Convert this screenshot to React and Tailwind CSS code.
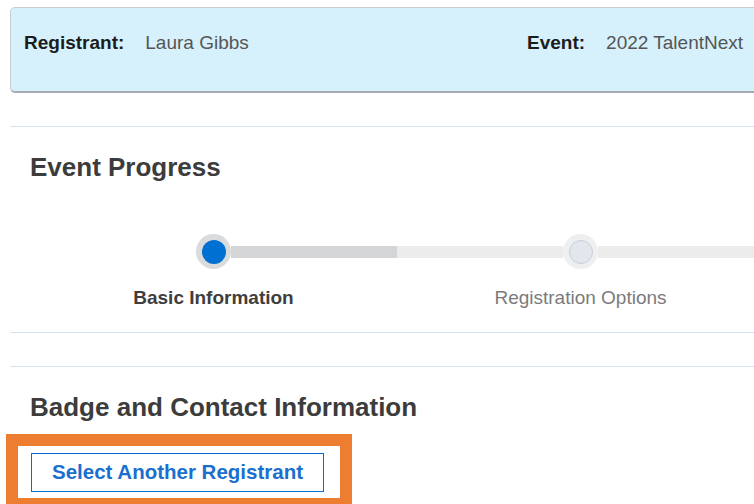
import { useState } from "react";

const steps = [
  { label: "Basic Information" },
  { label: "Registration Options" },
];

const StepDot = ({ active }) => {
  if (active) {
    return (
      <div className="w-[35px] h-[35px] shrink-0 rounded-full bg-[#dadbdc] flex items-center justify-center">
        <div className="w-[24px] h-[24px] rounded-full bg-[#0070d2]"></div>
      </div>
    );
  }
  return (
    <div className="w-[35px] h-[35px] shrink-0 rounded-full bg-[#efefef] flex items-center justify-center">
      <div className="w-[24px] h-[24px] rounded-full bg-[#e2e7ed] border-[1.5px] border-[#c7cfd9]"></div>
    </div>
  );
};

const Stepper = ({ current }) => {
  return (
    <div className="flex ml-[20px] mt-[52px]">
      {steps.map((step, i) => (
        <div key={step.label} className="w-[367px] shrink-0 flex flex-col items-center">
          <div className="w-full h-[35px] flex items-center">
            <div
              className={
                i === 0
                  ? "flex-1 h-[12px]"
                  : i <= current
                  ? "flex-1 h-[12px] bg-[#d4d5d7]"
                  : "flex-1 h-[12px] bg-[#ececec]"
              }
            ></div>
            <StepDot active={i === current} />
            <div
              className={
                i === current
                  ? "flex-1 h-[12px] bg-[#d4d5d7]"
                  : "flex-1 h-[12px] bg-[#ececec]"
              }
            ></div>
          </div>
          <p
            className={
              i === current
                ? "mt-[18px] text-[19px] leading-[22px] font-bold text-[#3e3e3e]"
                : "mt-[18px] text-[19px] leading-[22px] text-[#7b7b7b]"
            }
          >
            {step.label}
          </p>
        </div>
      ))}
    </div>
  );
};

const App = () => {
  const [current] = useState(0);

  return (
    <div className="w-[754px] h-[504px] overflow-hidden bg-white font-['Liberation_Sans',Arial,sans-serif]">
      {/* registrant summary */}
      <div className="ml-[10px] mt-[7px] w-[900px] h-[86px] bg-[#d6f1fc] border border-[#c9cdd0] border-b-[#a9adb1] border-b-2 rounded-[5px] flex items-start pt-[23px] pl-[13px]">
        <div className="w-[503px] flex items-center">
          <span className="text-[19px] leading-[24px] font-bold text-[#1c1c1c]">Registrant:</span>
          <span className="ml-[21px] text-[19px] leading-[24px] text-[#555]">Laura Gibbs</span>
        </div>
        <div className="flex items-center">
          <span className="text-[19px] leading-[24px] font-bold text-[#1c1c1c]">Event:</span>
          <span className="ml-[21px] text-[19px] leading-[24px] text-[#555]">2022 TalentNext</span>
        </div>
      </div>

      {/* progress */}
      <section className="ml-[10px] mt-[33px] border-t border-[#d9e3ec] pt-[25px] pb-[23px]">
        <h2 className="pl-[20px] text-[26px] leading-[30px] font-bold text-[#3c3c3c]">
          Event Progress
        </h2>
        <Stepper current={current} />
      </section>

      <div className="ml-[10px] border-t border-[#d9e3ec]"></div>

      {/* badge and contact */}
      <section className="ml-[10px] mt-[33px] border-t border-[#d9e3ec] pt-[25px]">
        <h2 className="pl-[20px] text-[26px] leading-[30px] font-bold text-[#3c3c3c]">
          Badge and Contact Information
        </h2>
      </section>
      <div className="ml-[6px] mt-[12px] w-[346px] border-[12px] border-[#ed7d31] bg-white pt-[7px] pl-[13px] pb-[6px]">
        <button className="w-[293px] h-[39px] border border-[#0070d2] bg-white text-[20.5px] font-bold text-[#1a6fcf]">
          Select Another Registrant
        </button>
      </div>
    </div>
  );
};

export default App;
